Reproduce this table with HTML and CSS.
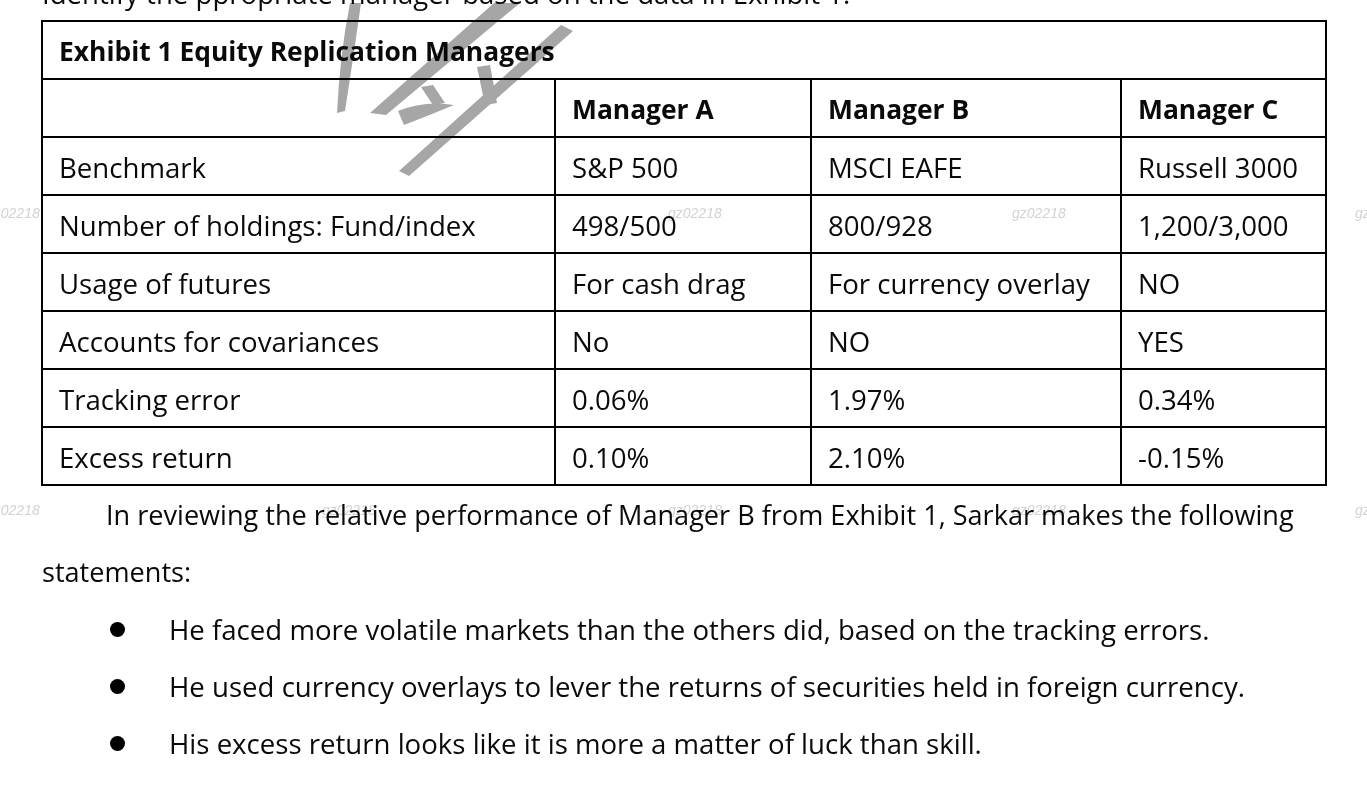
FILE: index.html
```html
<!DOCTYPE html>
<html lang="en">
<head>
<meta charset="utf-8">
<title>Exhibit 1 Equity Replication Managers</title>
<link rel="stylesheet" href="styles.css">
</head>
<body>
<div class="page">
  <p class="lead">Identify the ppropriate manager based on the data in Exhibit 1.</p>

  <div class="exhibit">
    <div class="cell title">Exhibit 1 Equity Replication Managers</div>

    <div class="cell"></div>
    <div class="cell head">Manager A</div>
    <div class="cell head">Manager B</div>
    <div class="cell head">Manager C</div>

    <div class="cell">Benchmark</div>
    <div class="cell">S&amp;P 500</div>
    <div class="cell">MSCI EAFE</div>
    <div class="cell">Russell 3000</div>

    <div class="cell">Number of holdings: Fund/index</div>
    <div class="cell">498/500</div>
    <div class="cell">800/928</div>
    <div class="cell">1,200/3,000</div>

    <div class="cell">Usage of futures</div>
    <div class="cell">For cash drag</div>
    <div class="cell">For currency overlay</div>
    <div class="cell">NO</div>

    <div class="cell">Accounts for covariances</div>
    <div class="cell">No</div>
    <div class="cell">NO</div>
    <div class="cell">YES</div>

    <div class="cell">Tracking error</div>
    <div class="cell">0.06%</div>
    <div class="cell">1.97%</div>
    <div class="cell">0.34%</div>

    <div class="cell">Excess return</div>
    <div class="cell">0.10%</div>
    <div class="cell">2.10%</div>
    <div class="cell">-0.15%</div>
  </div>

  <p class="body-text">In reviewing the relative performance of Manager B from Exhibit 1, Sarkar makes the following<br>statements:</p>

  <ul class="bullets">
    <li><span class="dot"></span><span>He faced more volatile markets than the others did, based on the tracking errors.</span></li>
    <li><span class="dot"></span><span>He used currency overlays to lever the returns of securities held in foreign currency.</span></li>
    <li><span class="dot"></span><span>His excess return looks like it is more a matter of luck than skill.</span></li>
  </ul>

  <svg class="wm-glyph" viewBox="0 0 1367 785" width="1367" height="785" aria-hidden="true">
    <path d="M350 20 L361 20 Q354 70 345 128 L337 130 Q340 70 350 20 Z"/>
    <path d="M494 20 L520 20 L386 132 L370 130 Z"/>
    <path d="M561 42 L573 48 L409 193 L399 188 Z"/>
    <path d="M477 84 L490 82 L497 120 L485 122 Z"/>
    <path d="M398 128 Q425 117 454 122 Q430 132 404 142 Z"/>
    <path d="M421 104 L433 102 L445 120 L433 122 Z"/>
  </svg>

  <div class="wm-text" aria-hidden="true">
    <span class="wm" style="left:-14px;top:221px">gz02218</span>
    <span class="wm" style="left:668px;top:221px">gz02218</span>
    <span class="wm" style="left:1012px;top:221px">gz02218</span>
    <span class="wm" style="left:1355px;top:221px">gz02218</span>
    <span class="wm" style="left:-14px;top:518px">gz02218</span>
    <span class="wm" style="left:322px;top:518px">gz02218</span>
    <span class="wm" style="left:668px;top:518px">gz02218</span>
    <span class="wm" style="left:1012px;top:518px">gz02218</span>
    <span class="wm" style="left:1355px;top:518px">gz02218</span>
  </div>
</div>
</body>
</html>
```

FILE: styles.css
```css
html, body {
  margin: 0;
  padding: 0;
  background: #ffffff;
}

body {
  font-family: "Open Sans", "Liberation Sans", sans-serif;
  font-size: 27.6px;
  color: #0a0a0a;
  overflow: hidden;
}

.page {
  position: relative;
  width: 1367px;
  height: 785px;
  padding-left: 41px;
  box-sizing: border-box;
}

.lead {
  margin: -17px 0 17px 1px;
  height: 20px;
  line-height: 20px;
  white-space: nowrap;
}

.exhibit {
  display: grid;
  grid-template-columns: 511px 254px 308px 203px;
  grid-auto-rows: 56px;
  gap: 2px;
  padding: 2px;
  width: 1286px;
  box-sizing: border-box;
  background: #000000;
}

.cell {
  background: #ffffff;
  display: flex;
  align-items: center;
  padding: 2px 16px 0 16px;
  white-space: nowrap;
}

.title {
  grid-column: 1 / -1;
  font-weight: 700;
  font-size: 26.4px;
}

.head {
  font-weight: 700;
  font-size: 26.4px;
}

.body-text {
  margin: 0;
  width: 1286px;
  font-size: 27.1px;
  line-height: 57px;
  text-indent: 64px;
  padding-left: 1px;
  white-space: nowrap;
}

.bullets {
  list-style: none;
  margin: 0;
  padding: 0 0 0 69px;
}

.bullets li {
  display: flex;
  align-items: center;
  height: 57px;
  gap: 44px;
  white-space: nowrap;
}

.dot {
  flex: none;
  width: 15px;
  height: 15px;
  border-radius: 50%;
  background: #000000;
  margin-top: 2px;
}

.wm-glyph {
  position: absolute;
  left: 0;
  top: 0;
  fill: #a6a6a6;
  mix-blend-mode: multiply;
  pointer-events: none;
}

.wm-text {
  position: absolute;
  inset: 0;
  pointer-events: none;
  mix-blend-mode: multiply;
}

.wm {
  position: absolute;
  font-family: "Liberation Sans", sans-serif;
  font-style: italic;
  font-size: 14px;
  line-height: 18px;
  color: #d2d2d2;
  white-space: nowrap;
}
```
